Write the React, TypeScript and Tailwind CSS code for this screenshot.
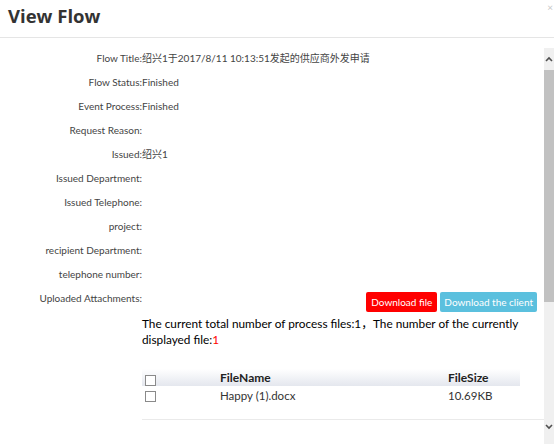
import React from 'react';

const rows: { label: string; value?: string }[] = [
  { label: 'Flow Title:', value: '绍兴1于2017/8/11 10:13:51发起的供应商外发申请' },
  { label: 'Flow Status:', value: 'Finished' },
  { label: 'Event Process:', value: 'Finished' },
  { label: 'Request Reason:' },
  { label: 'Issued:', value: '绍兴1' },
  { label: 'Issued Department:' },
  { label: 'Issued Telephone:' },
  { label: 'project:' },
  { label: 'recipient Department:' },
  { label: 'telephone number:' },
];

const font = { fontFamily: 'Lato, "Noto Sans CJK SC", sans-serif' };

const Checkbox: React.FC = () => (
  <span className="inline-block h-[11px] w-[11px] border border-[#8a8a8a] bg-white" />
);

const Scrollbar: React.FC = () => (
  <div className="flex w-[10px] flex-col bg-[#f0f0f0]">
    <div className="flex h-[22px] items-center justify-center">
      <svg width="8" height="6" viewBox="0 0 8 6">
        <path d="M1 5 L4 2 L7 5" fill="none" stroke="#505050" strokeWidth="1.6" />
      </svg>
    </div>
    <div className="h-[232px] bg-[#c1c1c1]" />
    <div className="flex-1" />
    <div className="flex h-[24px] items-start justify-center pt-[4px]">
      <svg width="8" height="6" viewBox="0 0 8 6">
        <path d="M1 1 L4 4 L7 1" fill="none" stroke="#505050" strokeWidth="1.6" />
      </svg>
    </div>
  </div>
);

export default function App() {
  return (
    <div className="flex h-[444px] w-[554px] flex-col overflow-hidden bg-white" style={font}>
      <div className="flex h-[38px] items-start justify-between border-b border-[#e5e5e5] pl-[8px] pr-[1px]">
        <h1
          className="pt-[4px] text-[18.5px] font-bold leading-[24px] text-[#333]"
          style={{ fontFamily: '"Open Sans", sans-serif' }}
        >
          View Flow
        </h1>
        <span className="pt-[1px] text-[10px] leading-[12px] text-[#c8c8c8]">×</span>
      </div>
      <div className="flex min-h-0 flex-1 pt-[10px]">
        <div className="min-w-0 flex-1 pr-[7px] pt-[2px]">
          {rows.map((r) => (
            <div key={r.label} className="mb-[8px] flex h-[16px] items-center text-[10px] text-[#444]">
              <span className="w-[142px] shrink-0 text-right">{r.label}</span>
              <span className="whitespace-nowrap">{r.value}</span>
            </div>
          ))}
          <div className="flex h-[24px] items-start text-[10px] text-[#444]">
            <span className="w-[142px] shrink-0 text-right leading-[16px]">Uploaded Attachments:</span>
            <div className="flex flex-1 justify-end gap-[3px] pt-[2px]">
              <button className="h-[20px] rounded-[2px] bg-[#ff0000] px-[5px] text-[10px] text-white">
                Download file
              </button>
              <button className="h-[20px] rounded-[2px] bg-[#5bc0de] px-[4px] text-[10px] text-white">
                Download the client
              </button>
            </div>
          </div>
          <div className="ml-[142px]">
            <p className="pt-[2px] text-[11.8px] leading-[16px] text-black">
              The current total number of process files:1，The number of the currently displayed file:
              <span className="text-[#ff0000]">1</span>
            </p>
            <div className="mt-[21px] w-[378px]">
              <div className="flex h-[17px] items-center bg-gradient-to-b from-white to-[#e4e7ee] text-[12px] font-bold text-[#222]">
                <span className="flex w-[78px] items-end pl-[3px] pt-[5px]">
                  <Checkbox />
                </span>
                <span className="w-[228px]">FileName</span>
                <span>FileSize</span>
              </div>
              <div className="flex h-[20px] items-center text-[11.5px] text-[#333]">
                <span className="flex w-[78px] pl-[3px]">
                  <Checkbox />
                </span>
                <span className="w-[228px]">Happy (1).docx</span>
                <span>10.69KB</span>
              </div>
            </div>
            <div className="mt-[13px] mr-[-7px] border-t border-[#eaeaea]" />
          </div>
        </div>
        <Scrollbar />
      </div>
    </div>
  );
}
